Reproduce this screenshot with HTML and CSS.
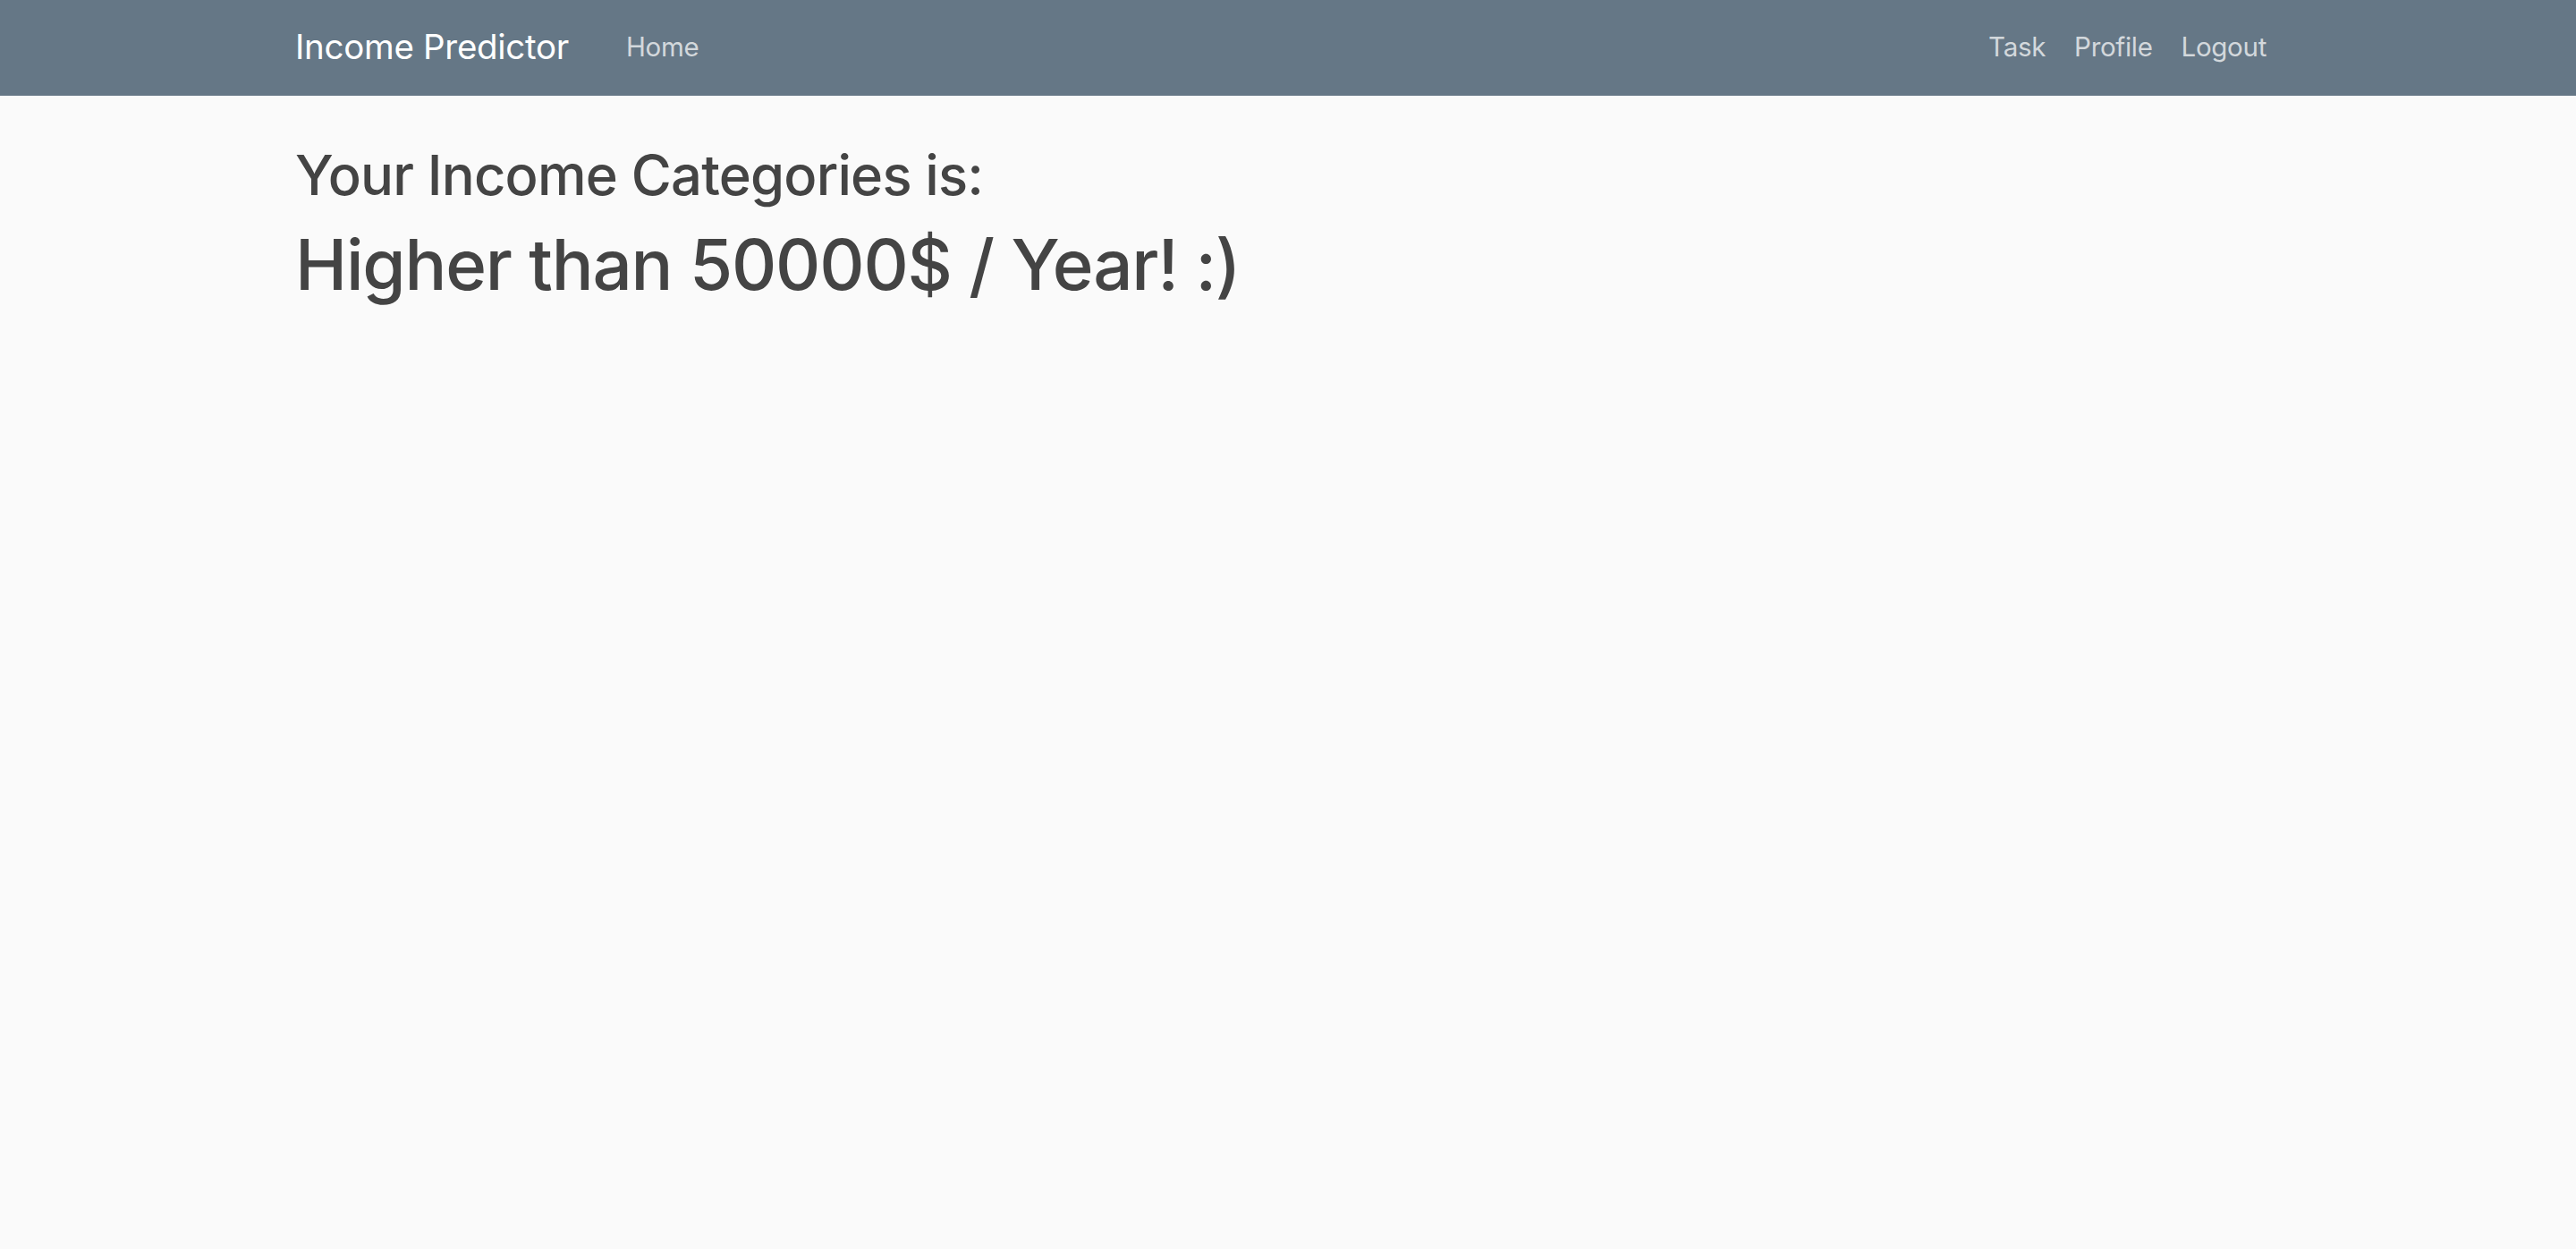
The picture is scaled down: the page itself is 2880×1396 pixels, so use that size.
FILE: index.html
```html
<!DOCTYPE html>
<html lang="en">
<head>
<meta charset="utf-8">
<title>Income Predictor</title>
<link rel="stylesheet" href="styles.css">
</head>
<body>
<nav class="navbar">
  <div class="container nav-inner">
    <a class="brand" href="#">Income Predictor</a>
    <ul class="nav-left">
      <li><a class="nav-link" href="#">Home</a></li>
    </ul>
    <ul class="nav-right">
      <li><a class="nav-link" href="#">Task</a></li>
      <li><a class="nav-link" href="#">Profile</a></li>
      <li><a class="nav-link" href="#">Logout</a></li>
    </ul>
  </div>
</nav>
<main class="container content">
  <h2 class="subtitle">Your Income Categories is:</h2>
  <h1 class="result">Higher than 50000$ / Year! :)</h1>
</main>
</body>
</html>
```
FILE: styles.css
```css
* { box-sizing: border-box; }
html, body { margin: 0; padding: 0; }
body {
  font-family: Inter, "Noto Sans", "Liberation Sans", sans-serif;
  background: #fafafa;
  color: #444444;
  min-height: 1396px;
}
.container {
  width: 2280px;
  margin: 0 auto;
  padding: 0 30px;
}
.navbar {
  background: #657786;
  height: 107px;
}
.nav-inner {
  display: flex;
  align-items: center;
  height: 100%;
  padding-bottom: 3px;
}
.brand {
  color: #ffffff;
  font-size: 38.5px;
  text-decoration: none;
  margin-right: 48px;
  letter-spacing: -0.3px;
}
.nav-left, .nav-right {
  list-style: none;
  margin: 0;
  padding: 0;
  display: flex;
}
.nav-right { margin-left: auto; }
.nav-link {
  display: block;
  padding: 0 16px;
  font-size: 29.5px;
  color: rgba(255, 255, 255, 0.72);
  text-decoration: none;
  letter-spacing: -0.3px;
}
.content { padding-top: 52px; }
.subtitle {
  font-size: 61.5px;
  font-weight: 500;
  line-height: 1.2;
  margin: 0 0 16px;
  letter-spacing: -0.8px;
}
.result {
  font-size: 78px;
  font-weight: 500;
  line-height: 1.2;
  margin: 0 0 16px;
  letter-spacing: -1.2px;
}
```
